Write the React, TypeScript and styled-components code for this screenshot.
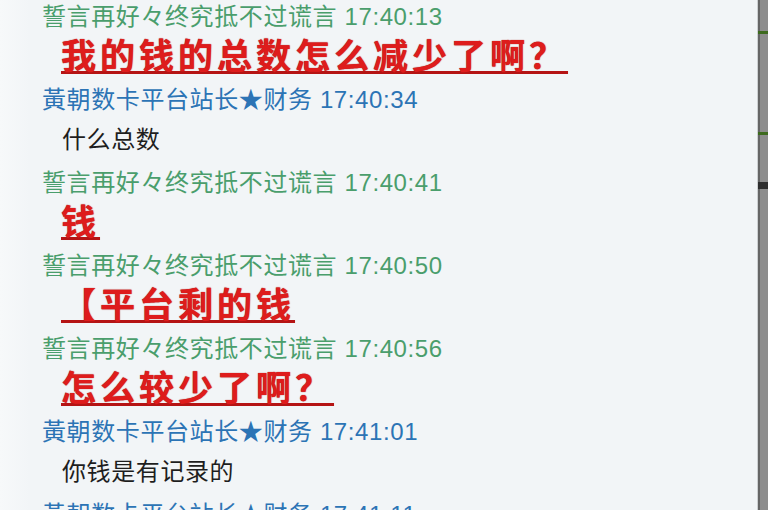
import React, { FunctionComponent } from "react";
import styled, { createGlobalStyle } from "styled-components";

interface Message {
  id: number;
  sender: "self" | "staff";
  time: string;
  text: string;
  loud?: boolean;
}

const SENDERS = {
  self: "誓言再好々终究抵不过谎言",
  staff: "黃朝数卡平台站长★财务"
};

const messages: Message[] = [
  { id: 1, sender: "self", time: "17:40:13", text: "我的钱的总数怎么减少了啊？", loud: true },
  { id: 2, sender: "staff", time: "17:40:34", text: "什么总数" },
  { id: 3, sender: "self", time: "17:40:41", text: "钱", loud: true },
  { id: 4, sender: "self", time: "17:40:50", text: "【平台剩的钱", loud: true },
  { id: 5, sender: "self", time: "17:40:56", text: "怎么较少了啊？", loud: true },
  { id: 6, sender: "staff", time: "17:41:01", text: "你钱是有记录的" },
  { id: 7, sender: "staff", time: "17:41:11", text: "" }
];

const App: FunctionComponent = () => {
  return (
    <>
      <GlobalStyle />
      <Window>
        <ChatPane>
          <List>
            {messages.map(item => (
              <Entry key={item.id}>
                <Header sender={item.sender}>
                  {SENDERS[item.sender]} {item.time}
                </Header>
                {item.text &&
                  (item.loud ? (
                    <LoudText>{item.text}</LoudText>
                  ) : (
                    <PlainText>{item.text}</PlainText>
                  ))}
              </Entry>
            ))}
          </List>
        </ChatPane>
        <Edge>
          <Mark gap={31} color="#3d6a1e" />
          <Mark gap={98} color="#3d6a1e" />
          <Mark gap={47} color="#2e2e2e" size={7} />
        </Edge>
      </Window>
    </>
  );
};

const GlobalStyle = createGlobalStyle`
  html, body {
    margin: 0;
    padding: 0;
    background: #f2f5f7;
  }
  body {
    font-family: "Liberation Sans", "Noto Sans CJK SC", sans-serif;
  }
`;

const Window = styled.div`
  display: flex;
  width: 768px;
  height: 510px;
  overflow: hidden;
`;
const ChatPane = styled.div`
  flex: 1;
  min-width: 0;
  background: linear-gradient(to right, #f7f9fa 0, #f2f5f7 30px, #f2f5f7 100%);
  overflow: hidden;
`;
const List = styled.div`
  display: flex;
  flex-direction: column;
  margin-top: -3px;
`;
const Entry = styled.div`
  display: flex;
  flex-direction: column;
`;
const Header = styled.div<{ sender: "self" | "staff" }>`
  height: 40px;
  line-height: 40px;
  padding-left: 42px;
  font-size: 24px;
  letter-spacing: 0.6px;
  white-space: nowrap;
  color: ${props => (props.sender === "self" ? "#4a9e6c" : "#2c74b5")};
`;
const PlainText = styled.div`
  height: 40px;
  line-height: 40px;
  padding: 0 0 3px 62px;
  font-size: 24px;
  letter-spacing: 0.6px;
  color: #1e1e1e;
`;
const LoudText = styled.div`
  height: 40px;
  line-height: 40px;
  padding: 0 0 3px 61px;
  font-size: 35px;
  font-weight: 700;
  letter-spacing: 4px;
  white-space: nowrap;
  color: #de1c1c;
  text-shadow: 0 0 1px #9a0c0c;
  text-decoration: underline;
  text-decoration-color: #b51414;
  text-decoration-thickness: 3px;
  text-underline-offset: 2px;
`;
const Edge = styled.div`
  display: flex;
  flex-direction: column;
  flex: 0 0 11px;
  height: 510px;
  box-sizing: border-box;
  border-left: 1px solid #cdd0d2;
  background: #8d8d8d;
  box-shadow: inset 2px 0 0 #666666;
`;
const Mark = styled.div<{ gap: number; color: string; size?: number }>`
  flex: 0 0 auto;
  height: ${props => props.size || 3}px;
  margin-top: ${props => props.gap}px;
  background: ${props => props.color};
`;

export default App;
